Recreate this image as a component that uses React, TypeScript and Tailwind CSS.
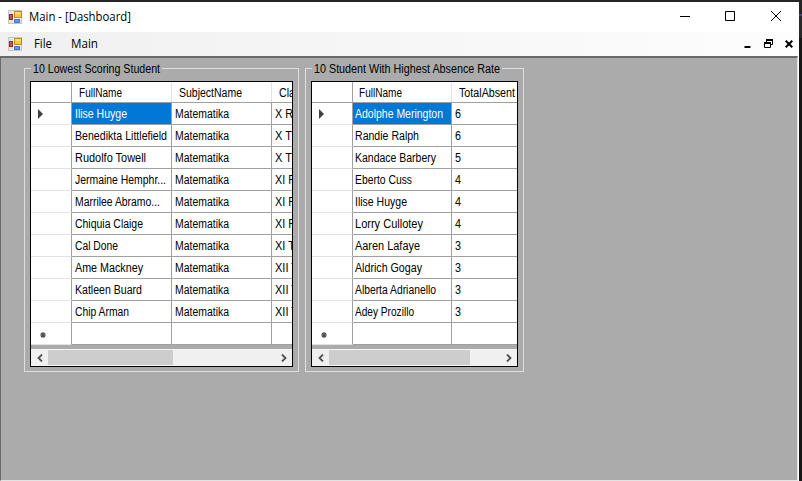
import React from "react";

function FormIcon() {
  return (
    <svg width="14" height="14" viewBox="0 0 14 14" className="block shrink-0">
      <rect x="0.5" y="0.5" width="13" height="13" fill="#e4e4e4" stroke="#c9c6c0" />
      <path d="M5.5 1V13M1 9.5H5M6 8.5H13" stroke="#fafafa" />
      <rect x="6.5" y="1.5" width="7" height="6" fill="#f8c944" stroke="#bd8a1c" />
      <rect x="7" y="2" width="5" height="2" fill="#ffe07a" />
      <rect x="1.5" y="4.5" width="3" height="5" fill="#d4503f" stroke="#a02a20" />
      <rect x="6.5" y="9.5" width="5" height="3" fill="#5d9af0" stroke="#4474cc" />
    </svg>
  );
}

type Cell = { text: string; width?: number };

function Label({ text, width }: Cell) {
  return (
    <svg width={width} height="16" className="block shrink-0 overflow-visible">
      <text x="0" y="12" textLength={width} lengthAdjust="spacingAndGlyphs" fill="currentColor">
        {text}
      </text>
    </svg>
  );
}

type GridProps = {
  title: Cell;
  boxClass: string;
  columnsClass: string;
  thumbClass: string;
  firstHeaderClass: string;
  firstCellClass: string;
  headers: Cell[];
  rows: Cell[][];
};

function DataGroup({ title, boxClass, columnsClass, thumbClass, firstHeaderClass, firstCellClass, headers, rows }: GridProps) {
  return (
    <section className={`h-[304px] shrink-0 border border-[#dedede] px-[5px] ${boxClass}`}>
      <div className="-mt-[8px] flex h-[20px] pl-[1px]">
        <div className="h-[17px] bg-[#ababab] px-[2px]">
          <Label {...title} />
        </div>
      </div>
      <div className="h-[286px] overflow-hidden border border-black bg-[#ababab]">
        <div className={`grid h-[21px] border-b border-[#a0a0a0] bg-white ${columnsClass}`}>
          <div className="border-r border-[#a0a0a0]" />
          {headers.map((h, i) => (
            <div
              key={i}
              className={`overflow-hidden border-r border-[#e2e2e2] pt-[3px] ${i === 0 ? firstHeaderClass : "pl-[7px]"}`}
            >
              <Label {...h} />
            </div>
          ))}
        </div>
        {rows.map((row, r) => (
          <div key={r} className={`grid h-[22px] bg-white ${columnsClass}`}>
            <div className="flex items-center border-r border-b border-r-[#a0a0a0] border-b-[#e2e2e2] pl-[7px]">
              {r === 0 && (
                <svg width="5" height="10" viewBox="0 0 5 10"><path d="M0 0L5 5L0 10Z" fill="#404040" /></svg>
              )}
              {r === 10 && (
                <svg width="8" height="8" viewBox="0 0 8 8" className="ml-px mt-[2px]"><path d="M4 1V7M1 4H7M2 2L6 6M6 2L2 6" stroke="#505050" strokeWidth="1.2" /></svg>
              )}
            </div>
            {row.map((c, i) => (
              <div
                key={i}
                className={`overflow-hidden border-r border-b border-[#a0a0a0] pt-[3px] ${i === 0 ? firstCellClass : "pl-[3px]"} ${r === 0 && i === 0 ? "bg-[#0078d7] text-white" : ""}`}
              >
                {c.text && <Label {...c} />}
              </div>
            ))}
          </div>
        ))}
        <div className="mt-[4px] flex h-[17px] items-stretch border-y border-[#f5f5f5] bg-[#f0f0f0]">
          <div className="flex w-[17px] items-center justify-center">
            <svg width="6" height="8" viewBox="0 0 6 8"><path d="M5 0.5L1.5 4L5 7.5" fill="none" stroke="#505050" strokeWidth="1.8" /></svg>
          </div>
          <div className={`bg-[#cdcdcd] ${thumbClass}`} />
          <div className="ml-auto flex w-[17px] items-center justify-center">
            <svg width="6" height="8" viewBox="0 0 6 8"><path d="M1 0.5L4.5 4L1 7.5" fill="none" stroke="#505050" strokeWidth="1.8" /></svg>
          </div>
        </div>
      </div>
    </section>
  );
}

const c = (text: string, width?: number): Cell => ({ text, width });

const scores: Cell[][] = [
  [c("Ilise Huyge", 52), c("Matematika", 54), c("X R", 18)],
  [c("Benedikta Littlefield", 92), c("Matematika", 54), c("X T", 17)],
  [c("Rudolfo Towell", 71), c("Matematika", 54), c("X T", 17)],
  [c("Jermaine Hemphr...", 91), c("Matematika", 54), c("XI R", 21)],
  [c("Marrilee Abramo...", 85), c("Matematika", 54), c("XI R", 21)],
  [c("Chiquia Claige", 68), c("Matematika", 54), c("XI R", 21)],
  [c("Cal Done", 43), c("Matematika", 54), c("XI T", 20)],
  [c("Ame Mackney", 68), c("Matematika", 54), c("XII T", 23)],
  [c("Katleen Buard", 67), c("Matematika", 54), c("XII T", 23)],
  [c("Chip Arman", 54), c("Matematika", 54), c("XII T", 23)],
  [c(""), c(""), c("")],
];

const absences: Cell[][] = [
  [c("Adolphe Merington", 88), c("6", 6)],
  [c("Randie Ralph", 64), c("6", 6)],
  [c("Kandace Barbery", 81), c("5", 6)],
  [c("Eberto Cuss", 57), c("4", 6)],
  [c("Ilise Huyge", 52), c("4", 6)],
  [c("Lorry Cullotey", 68), c("4", 6)],
  [c("Aaren Lafaye", 65), c("3", 6)],
  [c("Aldrich Gogay", 67), c("3", 6)],
  [c("Alberta Adrianello", 81), c("3", 6)],
  [c("Adey Prozillo", 59), c("3", 6)],
  [c(""), c("")],
];

export default function App() {
  return (
    <div className="flex h-[481px] w-[802px] overflow-hidden bg-[#161616] text-black">
      <div className="flex w-[799px] flex-col bg-white">
        <div className="h-[2px] shrink-0 bg-[#252525]" />
        <header className="flex h-[30px] shrink-0 items-center bg-white pl-2 font-['Open_Sans',sans-serif] text-[12px]">
          <FormIcon />
          <div className="ml-[7px]"><Label text="Main - [Dashboard]" width={102} /></div>
          <div className="ml-auto flex items-center pr-[18px]">
            <svg width="10" height="10" viewBox="0 0 10 10"><path d="M0 4.5H10" stroke="#000" /></svg>
            <svg width="10" height="10" viewBox="0 0 10 10" className="-mt-[2px] ml-[35px]"><path d="M.5 .5H9.5V9.5H.5Z" fill="none" stroke="#000" /></svg>
            <svg width="10" height="10" viewBox="0 0 10 10" className="-mt-[2px] ml-[36px]"><path d="M0 0L10 10M10 0L0 10" stroke="#000" /></svg>
          </div>
        </header>
        <nav className="flex h-[24px] shrink-0 items-center bg-linear-to-r from-[#f0f0f0] to-[#fdfdfd] pl-2 font-['Open_Sans',sans-serif] text-[12px]">
          <FormIcon />
          <div className="ml-[12px]"><Label text="File" width={18} /></div>
          <div className="ml-[19px]"><Label text="Main" width={27} /></div>
          <div className="ml-auto flex items-center pr-[6px]">
            <svg width="7" height="8" viewBox="0 0 7 8"><path d="M.5 7H6.5" stroke="#000" strokeWidth="2" /></svg>
            <svg width="9" height="9" viewBox="0 0 9 9" className="-mt-px ml-[13px]"><path d="M2.5 3V1H8.5V5.5H7M.5 4H6.5V8.5H.5Z" fill="none" stroke="#000" /><path d="M2 1H9M0 4H7" stroke="#000" strokeWidth="2" /></svg>
            <svg width="8" height="8" viewBox="0 0 8 8" className="ml-[12px]"><path d="M.7 .7L7.3 7.3M7.3 .7L.7 7.3" stroke="#000" strokeWidth="2" /></svg>
          </div>
        </nav>
        <main className="mr-px flex flex-1 items-start gap-[6px] border border-t-2 border-t-[#696969] border-r-[#e3e3e3] border-b-[#e3e3e3] border-l-[#696969] bg-[#ababab] pt-[10px] pl-[23px] font-['Liberation_Sans',Arial,sans-serif] text-[12px]">
          <DataGroup
            title={c("10 Lowest Scoring Student", 127)}
            boxClass="w-[275px]"
            columnsClass="grid-cols-[41px_100px_100px_100px]"
            thumbClass="w-[125px]"
            firstHeaderClass="pl-[7px]"
            firstCellClass="pl-[3px]"
            headers={[c("FullName", 43), c("SubjectName", 63), c("Cla", 16)]}
            rows={scores}
          />
          <DataGroup
            title={c("10 Student With Highest Absence Rate", 186)}
            boxClass="w-[219px]"
            columnsClass="grid-cols-[41px_99px_100px]"
            thumbClass="w-[141px]"
            firstHeaderClass="pl-[6px]"
            firstCellClass="pl-[2px]"
            headers={[c("FullName", 43), c("TotalAbsent", 56)]}
            rows={absences}
          />
        </main>
      </div>
      <div className="flex-1">
        <div className="h-[14px] bg-[#252525]" />
        <div className="h-[2px] bg-[#49418d]" />
        <div className="h-[22px] bg-[#292929]" />
      </div>
    </div>
  );
}
